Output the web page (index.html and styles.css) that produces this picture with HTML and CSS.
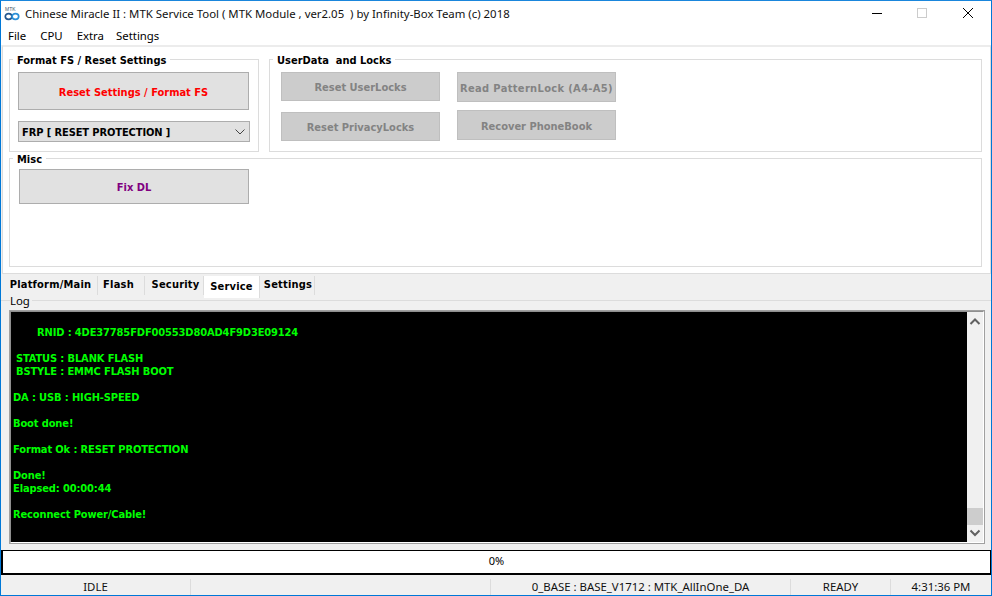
FILE: index.html
```html
<!DOCTYPE html>
<html lang="en">
<head>
<meta charset="utf-8">
<title>Chinese Miracle II</title>
<link rel="stylesheet" href="styles.css">
</head>
<body>
<div class="window">
  <header class="titlebar">
    <svg class="app-icon" width="16" height="16" viewBox="0 0 16 16"><text x="1" y="4.500" class="icon-text">MTK</text><ellipse cx="4.600" cy="10.500" rx="3.300" ry="2.800" fill="none" stroke="#24578f" stroke-width="1.700"/><ellipse cx="11.400" cy="10.500" rx="3.300" ry="2.800" fill="none" stroke="#2a8fd8" stroke-width="1.700"/></svg>
    <div class="title">Chinese Miracle II : MTK Service Tool ( MTK Module , ver2.05&nbsp; ) by Infinity-Box Team (c) 2018</div>
    <div class="controls">
      <svg width="46" height="16" viewBox="0 0 46 16"><path d="M19 7.500h10" stroke="#000" fill="none"/></svg>
      <svg width="46" height="16" viewBox="0 0 46 16"><rect x="18.500" y="2.500" width="9" height="9" stroke="#ccc" fill="none"/></svg>
      <svg width="46" height="16" viewBox="0 0 46 16"><path d="M18 2l10 10M28 2L18 12" stroke="#000" fill="none"/></svg>
    </div>
  </header>
  <nav class="menu"><span>File</span><span>CPU</span><span>Extra</span><span class="menu-last">Settings</span></nav>
  <main class="top">
    <div class="row-a">
      <fieldset class="group group-format">
        <legend>Format FS / Reset Settings</legend>
        <button class="btn btn-big red">Reset Settings / Format FS</button>
        <div class="combo"><span>FRP [ RESET PROTECTION ]</span><svg width="10" height="6" viewBox="0 0 10 6"><path d="M.5.5L5 5 9.500.5" fill="none" stroke="#444"/></svg></div>
      </fieldset>
      <fieldset class="group group-locks">
        <legend>UserData&nbsp; and Locks</legend>
        <div class="col col-l">
          <button class="btn off">Reset UserLocks</button>
          <button class="btn off">Reset PrivacyLocks</button>
        </div>
        <div class="col col-r">
          <button class="btn off tall wide">Read PatternLock (A4-A5)</button>
          <button class="btn off tall">Recover PhoneBook</button>
        </div>
      </fieldset>
    </div>
    <fieldset class="group group-misc">
      <legend>Misc</legend>
      <button class="btn btn-fix purple">Fix DL</button>
    </fieldset>
  </main>
  <div class="tabs">
    <span class="tab t1">Platform/Main</span><span class="tab t2">Flash</span><span class="tab t3">Security</span><span class="tab t4 on">Service</span><span class="tab t5">Settings</span>
  </div>
  <section class="log-area">
    <div class="log-label">Log</div>
    <div class="log-box">
      <div class="log">
        <div class="ln"></div>
        <div class="ln in2">RNID : 4DE37785FDF00553D80AD4F9D3E09124</div>
        <div class="ln"></div>
        <div class="ln in1">STATUS : BLANK FLASH</div>
        <div class="ln in1">BSTYLE : EMMC FLASH BOOT</div>
        <div class="ln"></div>
        <div class="ln">DA : USB : HIGH-SPEED</div>
        <div class="ln"></div>
        <div class="ln">Boot done!</div>
        <div class="ln"></div>
        <div class="ln">Format Ok : RESET PROTECTION</div>
        <div class="ln"></div>
        <div class="ln">Done!</div>
        <div class="ln">Elapsed: 00:00:44</div>
        <div class="ln"></div>
        <div class="ln">Reconnect Power/Cable!</div>
      </div>
      <div class="scroll">
        <svg width="16" height="16" viewBox="0 0 16 16"><path d="M3.500 11L8 6.500 12.500 11" fill="none" stroke="#606060" stroke-width="2"/></svg>
        <div class="track"><div class="thumb"></div></div>
        <svg width="16" height="16" viewBox="0 0 16 16"><path d="M3.500 5.500L8 10 12.500 5.500" fill="none" stroke="#606060" stroke-width="2"/></svg>
      </div>
    </div>
  </section>
  <div class="progress">0%</div>
  <footer class="status">
    <span class="s1">IDLE</span><span class="s2"></span><span class="s3">0_BASE : BASE_V1712 : MTK_AllInOne_DA</span><span class="s4">READY</span><span class="s5">4:31:36 PM</span>
  </footer>
</div>
</body>
</html>
```
FILE: styles.css
```css
* { box-sizing: border-box; }
html, body { margin: 0; padding: 0; }
body { width: 992px; height: 596px; overflow: hidden; background: #f0f0f0; font-family: "Noto Sans", "Open Sans", sans-serif; color: #000; }
.window { width: 992px; height: 596px; display: flex; flex-direction: column; border: 1px solid #0078d7; border-top-color: #1a86dc; background: #f0f0f0; }

.titlebar { height: 26px; flex: none; background: #fff; display: flex; align-items: center; padding-left: 3px; }
.app-icon { flex: none; }
.icon-text { font: 5px "Liberation Sans", sans-serif; fill: #456; }
.title { margin-left: 5px; margin-top: -2px; font-size: 11.4px; white-space: nowrap; flex: 1; color: #111; }
.controls { display: flex; flex: none; }
.controls svg { display: block; }

.menu { height: 18px; flex: none; background: #fff; display: flex; align-items: center; padding-left: 7px; padding-bottom: 2px; gap: 14px; font-size: 11.4px; }
.menu-last { margin-left: -2px; }
.top { height: 229px; flex: none; background: #fff; border-top: 2px solid #ececec; border-bottom: 1px solid #dcdcdc; border-left: 1px solid #dcdcdc; border-right: 1px solid #dcdcdc; padding: 5px 8px 0 6px; margin-left: 1px; display: flex; flex-direction: column; }
.row-a { display: flex; gap: 10px; height: 100px; flex: none; margin-bottom: -1px; }
.group { margin: 0; min-width: 0; border: 1px solid #dcdcdc; }
.group legend { font: bold 11px "DejaVu Sans Condensed", "DejaVu Sans", sans-serif; padding: 2px 4px 0; line-height: 13px; white-space: nowrap; }
.group-format { width: 250px; padding: 5px 0 0 8px; height: 100px; }
.group-format legend { margin-left: -5px; }
.group-locks { flex: 1; padding: 5px 0 0 11px; height: 100px; display: flex; gap: 17px; }
.group-locks legend { margin-left: -8px; }
.group-misc { height: 116px; flex: none; padding: 3px 0 0 9px; }
.group-misc legend { margin-left: -6px; }
.col { display: flex; flex-direction: column; width: 159px; }
.col-l { gap: 11px; }
.col-r { gap: 8px; }

.btn { display: block; padding: 2px 0 0; font: bold 11px "DejaVu Sans Condensed", "DejaVu Sans", sans-serif; border: 1px solid #adadad; background: #e1e1e1; }
.btn-big { width: 231px; height: 38px; }
.btn-fix { width: 230px; height: 35px; }
.red { color: #f00; }
.purple { color: #800080; }
.off { height: 29px; background: #cccccc; color: #838383; border-color: #bfbfbf; width: 159px; }
.tall { height: 30px; }
.wide { letter-spacing: .35px; }
.combo { width: 232px; height: 21px; margin-top: 11px; background: #e1e1e1; border: 1px solid #adadad; display: flex; align-items: center; justify-content: space-between; padding: 1px 4px 0 3px; font: bold 11px "DejaVu Sans Condensed", "DejaVu Sans", sans-serif; letter-spacing: -.1px; }

.tabs { height: 27px; flex: none; display: flex; padding: 2px 0 0 3px; align-items: flex-start; border-bottom: 1px solid #dcdcdc; }
.tab { display: block; height: 19px; padding-top: 2px; font: bold 11px "DejaVu Sans Condensed", "DejaVu Sans", sans-serif; letter-spacing: .2px; text-align: center; border-right: 1px solid #dcdcdc; background: #f0f0f0; }
.t1 { width: 94px; }
.t2 { width: 47px; padding-right: 5px; }
.t3 { width: 59px; padding-left: 3px; }
.t4 { width: 56px; }
.t5 { width: 55px; padding-left: 2px; }
.tab.on { background: #fff; height: 22px; padding-top: 4px; }

.log-area { height: 243px; flex: none; display: flex; flex-direction: column; padding: 0 6px 0 8px; }
.log-label { font-size: 11.4px; line-height: 12px; height: 15px; margin-top: -6px; margin-left: 1px; align-self: flex-start; background: linear-gradient(#f0f0f0, #f0f0f0) no-repeat 0 0 / 100% 12px; padding-right: 2px; }
.log-box { height: 234px; display: flex; background: #fff; border: 2px solid; border-color: #8f8f8f #fff #fff #8f8f8f; outline: 1px solid #a0a0a0; outline-offset: -1px; }
.log { flex: 1; background: #000; color: #00ff00; font: bold 11px/13px "DejaVu Sans Condensed", "DejaVu Sans", sans-serif; letter-spacing: -.12px; padding: 1px 0 0 2px; overflow: hidden; }
.ln { height: 13px; white-space: pre; }
.in1 { padding-left: 3px; }
.in2 { padding-left: 24px; }
.scroll { width: 16px; flex: none; background: #f0f0f0; display: flex; flex-direction: column; padding: 1px 0 1px; }
.scroll svg { flex: none; display: block; height: 16px; }
.track { flex: 1; display: flex; flex-direction: column; justify-content: flex-end; }
.thumb { height: 17px; background: #cdcdcd; }

.progress { height: 25px; flex: none; border: 2px solid #000; border-width: 1px 1px 2px 2px; margin-top: 6px; background: #fff; text-align: center; font-size: 11px; line-height: 20px; }
.status { flex: 1; display: flex; align-items: center; font-size: 11.4px; color: #111; padding-top: 4px; min-height: 0; }
.status span { display: block; text-align: center; height: 16px; line-height: 16px; border-right: 1px solid #dcdcdc; flex: none; }
.s1 { width: 190px; }
.s2 { width: 300px; }
.s3 { width: 300px; }
.s4 { width: 100px; }
.s5 { width: 100px; border-right: 0 !important; }
```
